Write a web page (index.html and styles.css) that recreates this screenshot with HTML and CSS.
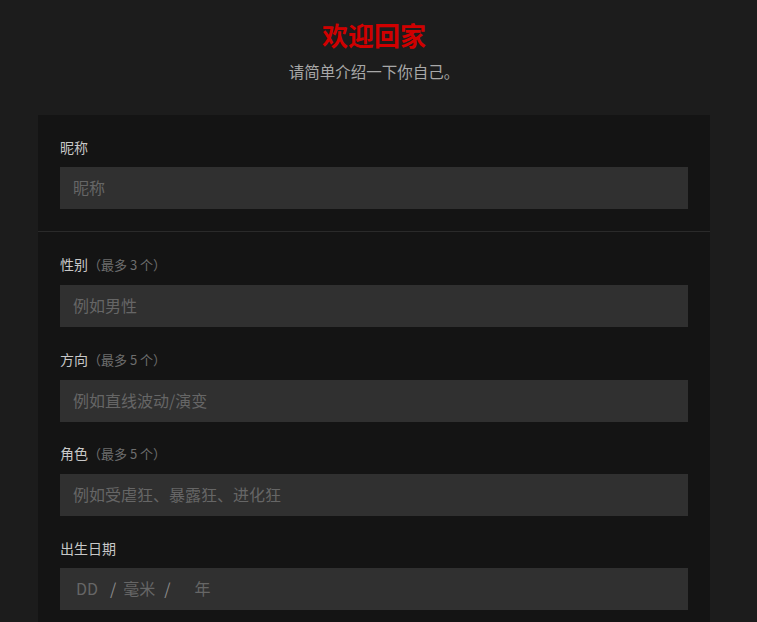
FILE: index.html
```html
<!DOCTYPE html>
<html lang="zh">
<head>
  <meta charset="UTF-8" />
  <title>欢迎回家</title>
  <link rel="stylesheet" href="styles.css">
</head>
<body>

  <div class="header">
    <h1>欢迎回家</h1>
    <p>请简单介绍一下你自己。</p>
  </div>

  <div class="card">
    <div class="section">
      <div class="field">
        <div class="label">昵称</div>
        <input class="input" type="text" placeholder="昵称" />
      </div>
    </div>

    <div class="section">
      <div class="field">
        <div class="label">性别<span class="hint">（最多 3 个）</span></div>
        <input class="input" type="text" placeholder="例如男性" />
      </div>
      <div class="field">
        <div class="label">方向<span class="hint">（最多 5 个）</span></div>
        <input class="input" type="text" placeholder="例如直线波动/演变" />
      </div>
      <div class="field">
        <div class="label">角色<span class="hint">（最多 5 个）</span></div>
        <input class="input" type="text" placeholder="例如受虐狂、暴露狂、进化狂" />
      </div>
      <div class="field">
        <div class="label">出生日期</div>
        <div class="input date">
          <span class="dd">DD</span>
          <span class="sep first">/</span>
          <span class="mm">毫米</span>
          <span class="sep">/</span>
          <span class="yy">年</span>
        </div>
      </div>
    </div>
  </div>

</body>
</html>
```

FILE: styles.css
```css
body {
  font-family: "Noto Sans CJK SC", "Noto Sans", sans-serif;
  background: #1c1c1c;
  margin: 0;
  padding: 0;
  color: #c8c8c8;
}

.header {
  width: 672px;
  margin-left: 38px;
  text-align: center;
  padding-top: 16px;
  height: 98px;
  box-sizing: border-box;
}

.header h1 {
  font-size: 26px;
  line-height: 38px;
  color: #d00000;
  margin: 0;
  font-weight: bold;
}

.header p {
  font-size: 15.5px;
  line-height: 22px;
  color: #a8a8a8;
  margin: 6px 0 0;
}

.card {
  width: 672px;
  margin: 17px 0 0 38px;
  background: #141414;
}

.section {
  padding: 22px 22px 0;
  border-bottom: 1px solid #2a2a2a;
}

.section:last-child {
  border-bottom: none;
}

.field {
  padding-bottom: 21.5px;
}

.section:first-child .field {
  padding-bottom: 22px;
}

.label {
  font-size: 14px;
  line-height: 20px;
  margin-bottom: 10px;
  color: #c8c8c8;
}

.hint {
  font-size: 13px;
  color: #6e6e6e;
}

.input {
  display: block;
  width: 100%;
  height: 42px;
  box-sizing: border-box;
  border: none;
  outline: none;
  background: #303030;
  padding: 0 13px 2px;
  font-family: inherit;
  font-size: 16px;
  color: #ddd;
}

.input::placeholder {
  color: #666;
}

.date {
  display: flex;
  align-items: center;
  padding-left: 16px;
  color: #666;
}

.date .sep {
  color: #8a8a8a;
  margin-left: 9px;
}

.date .sep.first {
  margin-left: 12px;
  margin-right: 7px;
}

.date .yy {
  margin-left: 24px;
}
```
